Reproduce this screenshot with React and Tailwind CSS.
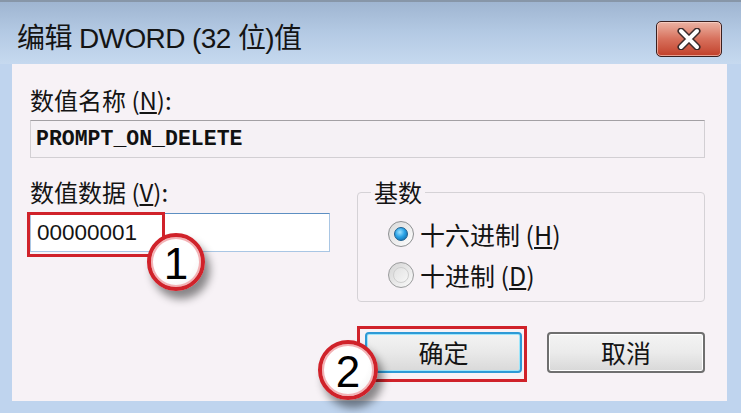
export default function App() {
  const cjk = "font-['Noto_Sans_CJK_SC',sans-serif]";
  return (
    <div className="w-[741px] h-[413px] flex flex-col bg-[#bfd4ee] overflow-hidden font-['Liberation_Sans','Noto_Sans_CJK_SC',sans-serif] text-[#141414]">
      {/* title bar */}
      <div className="h-[64px] shrink-0 flex items-start bg-linear-to-b from-[#9fb5d1] via-[#b4cae4] to-[#c6d9ef] border-t-[2px] border-[#8796a8]">
        <div className="flex-1 pl-[17px] pt-[21px] text-[28px] leading-[32px] tracking-[-0.6px]">
          编辑 DWORD (32 位)值
        </div>
        <div className="mt-[19px] mr-[19px] w-[66px] h-[36px] rounded-[5px] border border-[#3a2020] bg-linear-to-b from-[#eab3a4] via-[#d7705c] to-[#c13f29] shadow-[inset_0_0_0_1px_rgba(255,220,210,0.6)] flex items-center justify-center">
          <svg width="26" height="22" viewBox="0 0 26 22">
            <path d="M5 3 L21 19 M21 3 L5 19" stroke="#3b2a2a" strokeWidth="7" strokeLinecap="round" />
            <path d="M5 3 L21 19 M21 3 L5 19" stroke="#ffffff" strokeWidth="4" strokeLinecap="round" />
          </svg>
        </div>
      </div>

      {/* content */}
      <div className="relative flex-1 ml-[12px] mr-[14px] mb-[12px] bg-[#f7f2f6] pl-[18px] pr-[22px] flex flex-col">
        <div className={`mt-[22px] h-[28px] leading-[28px] text-[24px] ${cjk}`}>
          数值名称 (<span className="underline">N</span>):
        </div>
        <div className="mt-[6px] h-[38px] border border-[#d2cfd3] border-t-[#a3a0a4] bg-[#f5f1f5] flex items-center pl-[5px] font-['Liberation_Mono',monospace] font-bold text-[21.5px] text-[#111]">
          PROMPT_ON_DELETE
        </div>

        <div className="mt-[20px] flex">
          <div className="w-[300px] flex flex-col">
            <div className={`h-[28px] leading-[28px] text-[24px] ${cjk}`}>
              数值数据 (<span className="underline">V</span>):
            </div>
            <div className="relative mt-[7px] h-[39px] bg-white border border-[#a9c6e4] border-t-[#5d8fc2] flex items-center pl-[6px] text-[22.5px]">
              00000001
              <div className="absolute left-[-4px] top-[-2px] w-[138px] h-[45px] border-[3px] border-[#d0222a]" />
            </div>
          </div>

          <fieldset className="ml-[27px] flex-1 h-[124px] border border-[#d5d2d6] rounded-[4px] px-0 pb-0">
            <legend className={`ml-[13px] px-[3px] h-[28px] leading-[28px] text-[24px] ${cjk}`}>基数</legend>
            <div className="mt-[13px] ml-[30px] flex items-center h-[30px]">
              <div className="w-[26px] h-[26px] rounded-full border border-[#8d8f91] bg-linear-to-br from-[#d9d9d9] to-[#ffffff] flex items-center justify-center">
                <div className="w-[14px] h-[14px] rounded-full bg-[radial-gradient(circle_at_40%_35%,#9fe3ff_0%,#2aa3e6_45%,#0b5d98_100%)] border border-[#1c5f8f]" />
              </div>
              <span className={`ml-[6px] text-[25px] leading-[30px] ${cjk}`}>
                十六进制 (<span className="underline">H</span>)
              </span>
            </div>
            <div className="mt-[11px] ml-[30px] flex items-center h-[30px]">
              <div className="w-[26px] h-[26px] rounded-full border border-[#9a9b9c] bg-linear-to-br from-[#d4d4d4] to-[#fbfbfb] flex items-center justify-center">
                <div className="w-[16px] h-[16px] rounded-full bg-linear-to-br from-[#e2e2e2] to-[#f6f6f6] border border-[#cfcfcf]" />
              </div>
              <span className={`ml-[6px] text-[25px] leading-[30px] ${cjk}`}>
                十进制 (<span className="underline">D</span>)
              </span>
            </div>
          </fieldset>
        </div>

        <div className="mt-[24px] flex justify-end items-start">
          <div className="w-[170px] h-[56px] border-[3px] border-[#d0222a] pl-[5px] pr-[2px] pt-[3px] pb-[6px]">
            <div className={`w-full h-full rounded-[4px] border-[2px] border-[#2e9ad6] shadow-[inset_0_0_0_1px_#9fe6fb] bg-linear-to-b from-[#f3f3f3] via-[#e9e9e9] to-[#d9d9d9] flex items-center justify-center text-[25px] ${cjk}`}>
              确定
            </div>
          </div>
          <div className={`ml-[20px] mt-[6px] w-[158px] h-[41px] rounded-[4px] border-[2px] border-[#6f6f6f] shadow-[inset_0_0_0_1px_#ffffff] bg-linear-to-b from-[#f4f4f4] via-[#ebebeb] to-[#d8d8d8] flex items-center justify-center text-[25px] ${cjk}`}>
            取消
          </div>
        </div>

        {/* annotation circles */}
        <div className="absolute left-[135px] top-[169px] w-[58px] h-[58px] rounded-full border-[4px] border-[#d0222a] bg-[radial-gradient(circle_at_40%_35%,#ffffff_55%,#ececec_100%)] shadow-[inset_0_0_0_2px_#f3b3b6,5px_8px_8px_rgba(0,0,0,0.45)] flex items-center justify-center text-[44px] leading-none pt-[4px] text-black">
          1
        </div>
        <div className="absolute left-[306px] top-[276px] w-[60px] h-[60px] rounded-full border-[4px] border-[#d0222a] bg-[radial-gradient(circle_at_40%_35%,#ffffff_55%,#ececec_100%)] shadow-[inset_0_0_0_2px_#f3b3b6,5px_8px_8px_rgba(0,0,0,0.45)] flex items-center justify-center text-[44px] leading-none pt-[4px] text-black">
          2
        </div>
      </div>
    </div>
  );
}
